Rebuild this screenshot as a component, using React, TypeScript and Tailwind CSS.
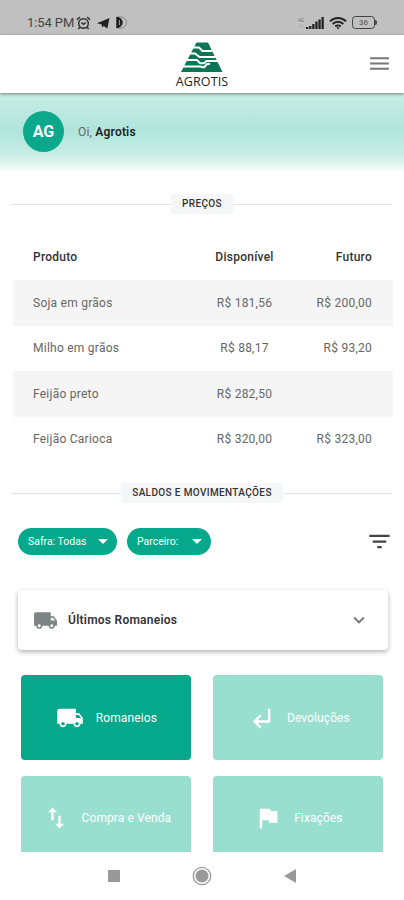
import type { ReactNode } from "react";
import type { IconType } from "react-icons";
import {
  MdExpandMore,
  MdFilterList,
  MdFlag,
  MdImportExport,
  MdLocalShipping,
  MdMenu,
  MdSubdirectoryArrowLeft,
} from "react-icons/md";

type Price = {
  product: string;
  available: string;
  future?: string;
};

const prices: Price[] = [
  { product: "Soja em grãos", available: "R$ 181,56", future: "R$ 200,00" },
  { product: "Milho em grãos", available: "R$ 88,17", future: "R$ 93,20" },
  { product: "Feijão preto", available: "R$ 282,50" },
  { product: "Feijão Carioca", available: "R$ 320,00", future: "R$ 323,00" },
];

const tiles: { label: string; icon: IconType; active?: boolean }[] = [
  { label: "Romaneios", icon: MdLocalShipping, active: true },
  { label: "Devoluções", icon: MdSubdirectoryArrowLeft },
  { label: "Compra e Venda", icon: MdImportExport },
  { label: "Fixações", icon: MdFlag },
];

function StatusBar() {
  return (
    <div className="flex h-[35px] shrink-0 items-center justify-between bg-[#c0c0c0] pt-[10px] pr-[27px] pl-[27px] text-[#444]">
      <div className="flex items-center">
        <span className="w-[47px] whitespace-nowrap text-[13px] tracking-[-0.1px]">
          1:54 PM
        </span>
        {/* Alarm */}
        <svg width="15" height="14" viewBox="0 0 15 14" fill="none" stroke="#333" strokeWidth="1.5" className="ml-[2px]">
          <circle cx="7.5" cy="7.5" r="4.8" />
          <path d="M1 3.6 4 1M14 3.6 11 1M3.8 11.3 2.4 13M11.2 11.3l1.4 1.7M5.4 6.6l2 1.6 2.4-1.6" />
        </svg>
        {/* Telegram */}
        <svg width="13" height="12" viewBox="0 0 13 12" className="ml-[6px]">
          <path d="M0 6.3 12.5 1 10.4 11.5 6.6 8.9 5 10.6 4.7 7.6Z" fill="#222" />
        </svg>
        {/* Half disc */}
        <svg width="12" height="13" viewBox="0 0 12 13" className="ml-[6px]">
          <path d="M.7 1H5a5.5 5.5 0 0 1 0 11H.7Z" fill="none" stroke="#888" />
          <path d="M.3 1h2.4c2.6 1.4 4 3.2 4 5.5s-1.4 4.1-4 5.5H.3Z" fill="#222" />
          <path d="M3.5 4v5" stroke="#999" />
        </svg>
      </div>
      <div className="flex items-center">
        <div className="flex w-[8px] flex-col text-[5px] leading-[6px] text-[#777]">
          <span>4G</span>
          <span>↓↑</span>
        </div>
        <svg width="18" height="12" viewBox="0 0 18 12" fill="#222">
          <path d="M0 10h2.3v2H0zM3.1 9h2.3v3H3.1zM6.2 7h2.3v5H6.2zM9.3 4.5h2.3V12H9.3zM12.4 2.5h2.3V12h-2.3zM15.5 0h2.3v12h-2.3z" />
        </svg>
        <svg width="18" height="14" viewBox="0 0 18 14" fill="none" stroke="#222" strokeWidth="1.9" className="ml-[5px]">
          <path d="M1 5.4a11.2 11.2 0 0 1 16 0M3.7 8a7.4 7.4 0 0 1 10.6 0M6.3 10.5a3.8 3.8 0 0 1 5.4 0" />
          <path d="M7.5 11.2h3L9 13.4Z" fill="#222" stroke="none" />
        </svg>
        <div className="ml-[5px] flex h-[13px] w-[23px] items-center justify-center rounded-[3.5px] border-[1.5px] border-[#444] text-[8px] leading-none text-[#555]">
          36
        </div>
        <div className="h-[5px] w-[2px] rounded-r bg-[#444]" />
      </div>
    </div>
  );
}

function Logo() {
  return (
    <div className="flex flex-col items-center">
      <svg width="42" height="30" viewBox="0 0 42 30">
        <path d="M15.5.5H27L41.500 30H0Z" fill="#0c7554" />
        <g fill="none" stroke="#fff" strokeWidth="2">
          <path d="M8 5.500h10l3.500 3.500h10" />
          <path d="M5 11.500h9l4.500 3.500h16" />
          <path d="M3 18h13l3 3.200h4l2.500-2.200h13" />
          <path d="M0 24.500h19l4 1 3-3.500h3" />
        </g>
      </svg>
      <span className="mt-[3.5px] text-[12.5px] leading-[14px] font-medium tracking-[0.1px] text-[#222] [font-family:'Open_Sans',sans-serif]">
        AGROTIS
      </span>
    </div>
  );
}

function Header() {
  return (
    <header className="relative z-10 flex h-[58px] shrink-0 items-center justify-center bg-white pt-[3px] shadow-[0_1px_3px_rgba(0,0,0,0.45)]">
      <Logo />
      <MdMenu size={25} className="absolute top-[16px] right-[12px] text-[#777]" />
    </header>
  );
}

function SectionTitle({ children }: { children: ReactNode }) {
  return (
    <div className="flex h-5 items-center px-3">
      <div className="h-px flex-1 bg-[#e2e2e2]" />
      <h2 className="rounded-sm bg-[#f5f6f7] px-[11px] text-[10px] leading-5 font-medium tracking-[0.36px] text-[#333]">
        {children}
      </h2>
      <div className="h-px flex-1 bg-[#e2e2e2]" />
    </div>
  );
}

function FilterChip({ label }: { label: string }) {
  return (
    <button className="flex h-[27px] items-center rounded-full bg-[#05a88b] pr-[9px] pl-[10px] text-[10.5px] text-white">
      {label}
      <svg width="10" height="5" viewBox="0 0 10 5" className="ml-auto">
        <path d="M0 0h10L5 5Z" fill="#fff" />
      </svg>
    </button>
  );
}

export default function App() {
  return (
    <div className="flex h-[900px] w-[404px] flex-col overflow-hidden bg-white font-[Roboto,sans-serif]">
      <StatusBar />
      <Header />

      <div className="flex h-[80px] shrink-0 items-center bg-[linear-gradient(to_bottom,#c4ede2_0%,#bde8e2_25%,#b0e5da_45%,#c4ece5_75%,#e4f6f1_90%,#ffffff_100%)] pl-[23px]">
        <div className="mb-[3px] flex size-[41px] items-center justify-center rounded-full bg-[#0ba88b] text-[16px] font-bold text-white">
          AG
        </div>
        <p className="mb-[3px] ml-[14px] text-[12px] tracking-[0.2px] text-[#666]">
          Oi, <strong className="font-semibold text-[#222]">Agrotis</strong>
        </p>
      </div>

      <main className="min-h-0 flex-1 overflow-hidden pt-[21px]">
        <SectionTitle>PREÇOS</SectionTitle>

        <table className="mt-[20px] ml-[13px] w-[380px] table-fixed text-[12px] tracking-[0.25px] text-[#666]">
          <thead className="text-[#333]">
            <tr className="h-[46px]">
              <th className="w-[170px] pl-[20px] text-left font-medium">Produto</th>
              <th className="w-[123px] text-center font-medium">Disponível</th>
              <th className="pr-[21px] text-right font-medium">Futuro</th>
            </tr>
          </thead>
          <tbody>
            {prices.map((p) => (
              <tr key={p.product} className="h-[45.5px] odd:bg-[#f5f5f5]">
                <td className="pl-[20px]">{p.product}</td>
                <td className="text-center">{p.available}</td>
                <td className="pr-[21px] text-right">{p.future}</td>
              </tr>
            ))}
          </tbody>
        </table>

        <div className="mt-[21px]">
          <SectionTitle>SALDOS E MOVIMENTAÇÕES</SectionTitle>
        </div>

        <div className="mt-[25px] flex items-center pr-[11px] pl-[18px]">
          <div className="grid w-[99px]">
            <FilterChip label="Safra: Todas" />
          </div>
          <div className="ml-[10px] grid w-[84px]">
            <FilterChip label="Parceiro:" />
          </div>
          <MdFilterList size={27} className="ml-auto text-[#444]" />
        </div>

        {/* Últimos romaneios */}
        <div className="mt-[35px] mr-[16px] ml-[18px] flex h-[60px] items-center rounded-[4px] bg-white pr-[18px] pl-[15px] shadow-[0_2px_5px_rgba(0,0,0,0.3)]">
          <MdLocalShipping size={25} className="text-[#7c8583]" />
          <span className="ml-[10px] text-[12px] font-semibold tracking-[0.25px] text-[#333]">
            Últimos Romaneios
          </span>
          <MdExpandMore size={22} className="ml-auto text-[#777]" />
        </div>

        <div className="mt-[25px] grid grid-cols-2 gap-x-[22px] gap-y-[15.5px] pr-[20.6px] pl-[21.4px]">
          {tiles.map(({ label, icon: Icon, active }) => (
            <div
              key={label}
              className={`flex h-[85px] items-center justify-center gap-[12px] rounded-[4px] text-[12px] tracking-[0.1px] text-white ${
                active ? "bg-[#05a88b]" : "bg-[#98dfd0]"
              }`}
            >
              <Icon size={28} />
              <span>{label}</span>
            </div>
          ))}
        </div>
      </main>

      {/* Android navigation */}
      <nav className="flex h-[48px] shrink-0 items-center pl-[108px]">
        <div className="size-[12px] bg-[#999]" />
        <svg width="20" height="20" viewBox="0 0 20 20" className="ml-[72px]">
          <circle cx="10" cy="10" r="8.7" fill="none" stroke="#999" strokeWidth="1.3" />
          <circle cx="10" cy="10" r="6.5" fill="#999" />
        </svg>
        <svg width="12" height="14" viewBox="0 0 12 14" className="ml-[72px]">
          <path d="M12 0v14L0 7Z" fill="#999" />
        </svg>
      </nav>
    </div>
  );
}
